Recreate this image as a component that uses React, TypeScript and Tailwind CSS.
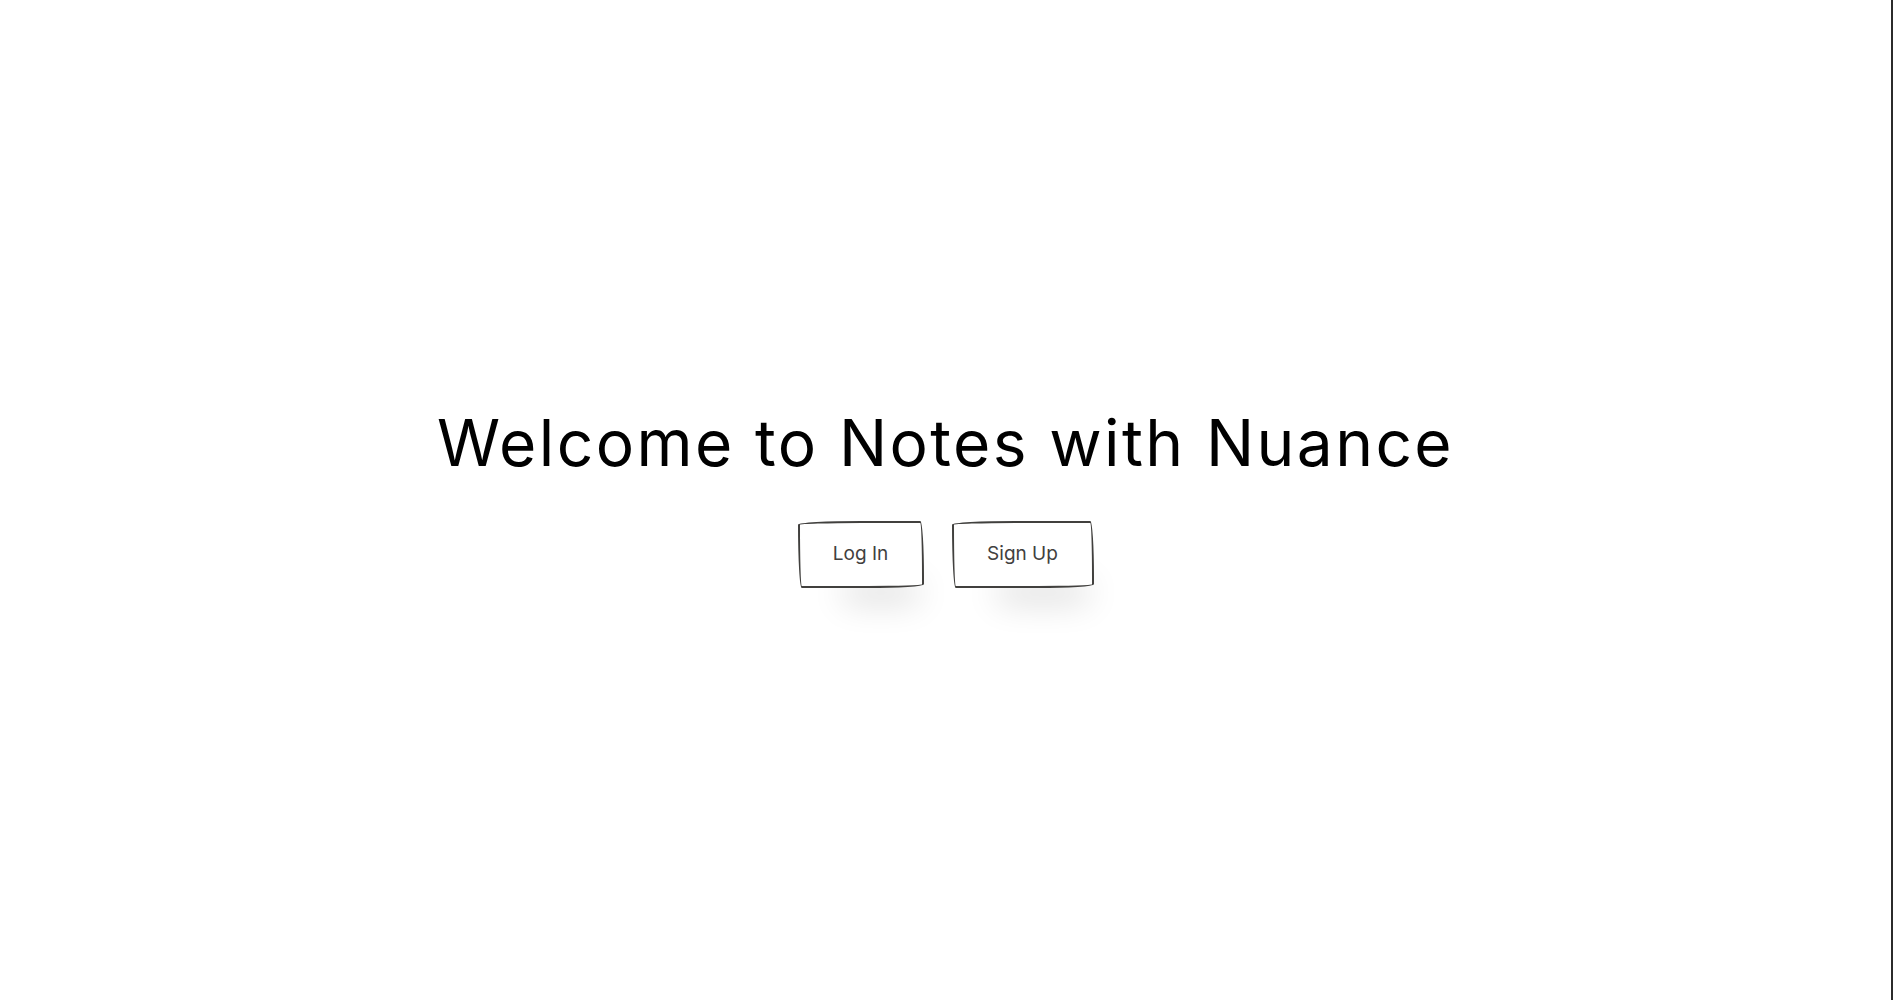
import React from 'react';

const App: React.FC = () => {
  return (
    <div className="h-screen w-full bg-white border-r-2 border-[#2b2b2b] flex flex-col items-center justify-center font-['Inter',sans-serif]">
      {/* Hero */}
      <h1 className="text-[64px] leading-none font-normal text-black tracking-[2.4px] mt-[-1px]">
        Welcome to Notes with Nuance
      </h1>

      {/* Actions */}
      <div className="flex items-center gap-[28px] mt-[46px]">
        <button className="w-[126px] h-[67px] bg-white text-[#41403e] text-[19px] border-2 border-[#41403e] rounded-[255px_15px_225px_15px/15px_225px_15px_255px] shadow-[20px_38px_34px_-26px_rgba(0,0,0,0.2)]">
          Log In
        </button>
        <button className="w-[142px] h-[67px] bg-white text-[#41403e] text-[19px] border-2 border-[#41403e] rounded-[255px_15px_225px_15px/15px_225px_15px_255px] shadow-[20px_38px_34px_-26px_rgba(0,0,0,0.2)]">
          Sign Up
        </button>
      </div>
    </div>
  );
};

export default App;
